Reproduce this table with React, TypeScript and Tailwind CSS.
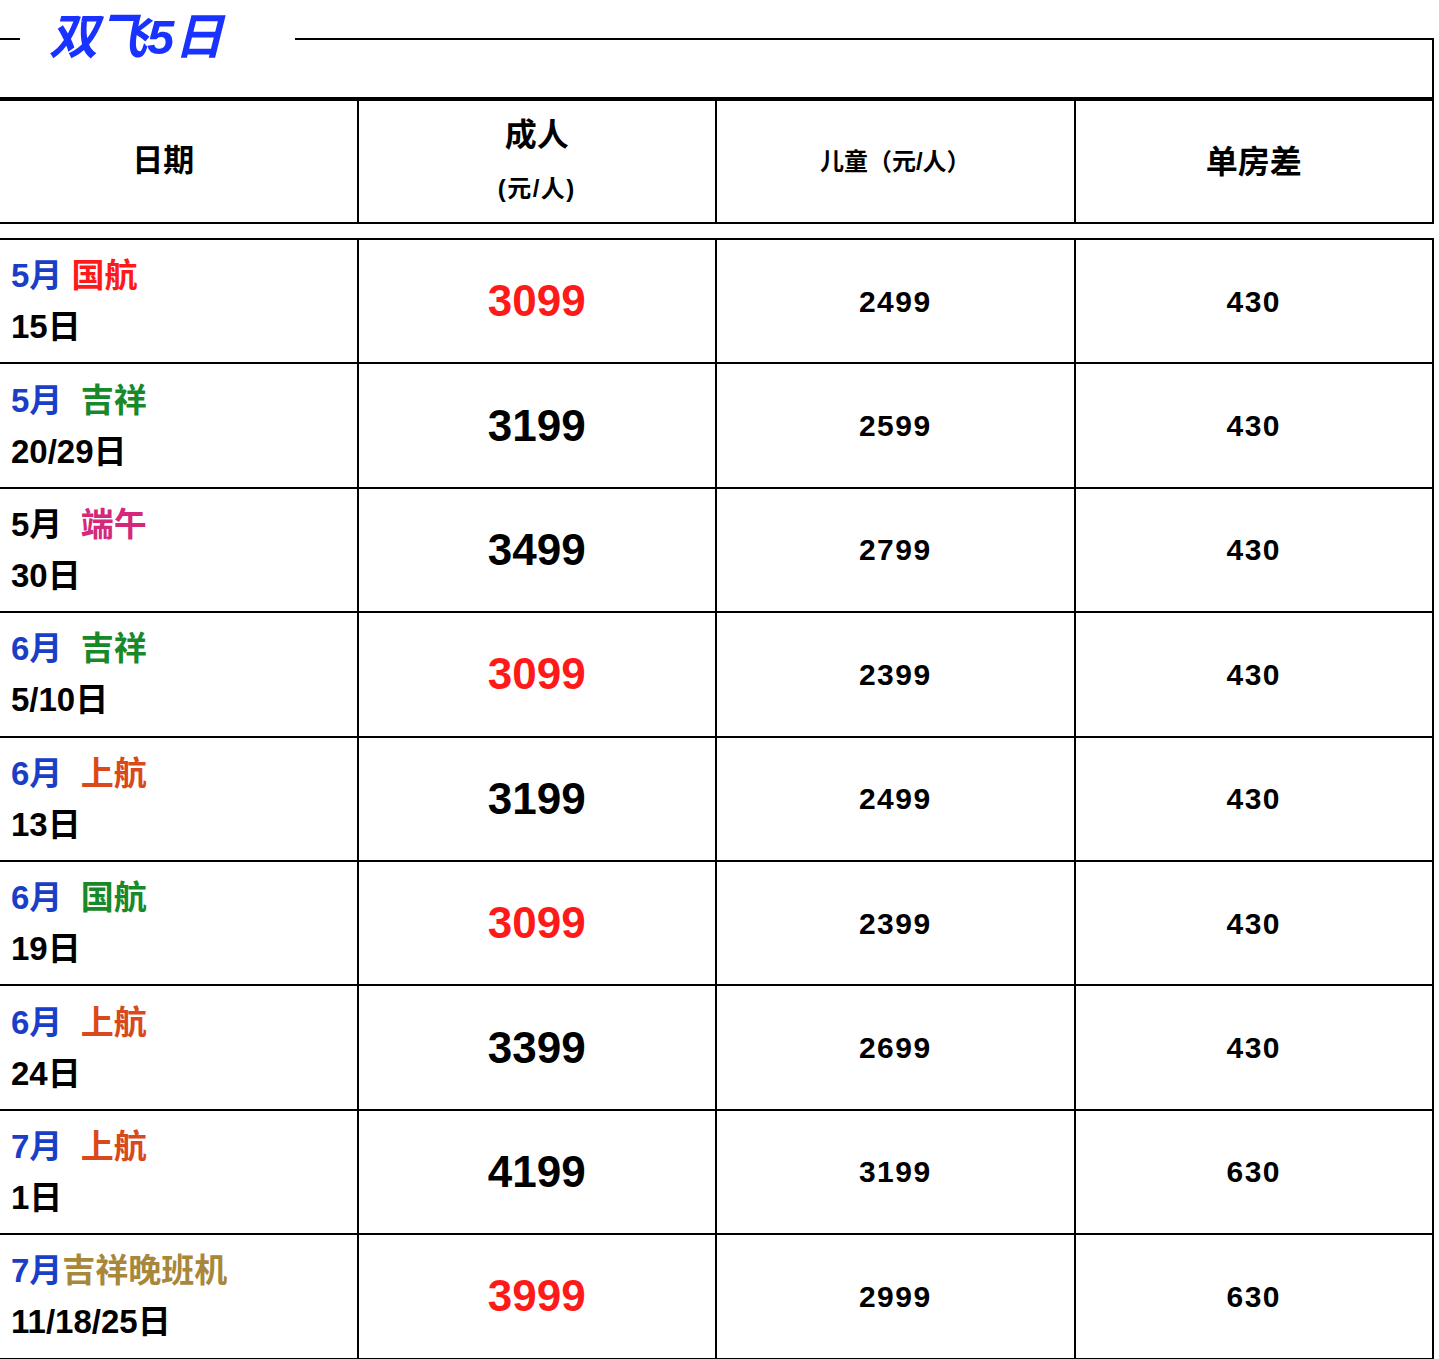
const FONT = "font-['Liberation_Sans','Noto_Sans_CJK_SC',sans-serif]";

type Row = {
  month: string;
  monthColor: string;
  gap: string;
  airline: string;
  airlineColor: string;
  days: string;
  adult: string;
  adultRed: boolean;
  child: string;
  single: string;
};

const rows: Row[] = [
  { month: '5月', monthColor: 'text-[#1b3ec6]', gap: ' ', airline: '国航', airlineColor: 'text-[#ff1a1a]', days: '15日', adult: '3099', adultRed: true, child: '2499', single: '430' },
  { month: '5月', monthColor: 'text-[#1b3ec6]', gap: '  ', airline: '吉祥', airlineColor: 'text-[#17892b]', days: '20/29日', adult: '3199', adultRed: false, child: '2599', single: '430' },
  { month: '5月', monthColor: 'text-black', gap: '  ', airline: '端午', airlineColor: 'text-[#d4297a]', days: '30日', adult: '3499', adultRed: false, child: '2799', single: '430' },
  { month: '6月', monthColor: 'text-[#1b3ec6]', gap: '  ', airline: '吉祥', airlineColor: 'text-[#17892b]', days: '5/10日', adult: '3099', adultRed: true, child: '2399', single: '430' },
  { month: '6月', monthColor: 'text-[#1b3ec6]', gap: '  ', airline: '上航', airlineColor: 'text-[#d8491c]', days: '13日', adult: '3199', adultRed: false, child: '2499', single: '430' },
  { month: '6月', monthColor: 'text-[#1b3ec6]', gap: '  ', airline: '国航', airlineColor: 'text-[#17892b]', days: '19日', adult: '3099', adultRed: true, child: '2399', single: '430' },
  { month: '6月', monthColor: 'text-[#1b3ec6]', gap: '  ', airline: '上航', airlineColor: 'text-[#d8491c]', days: '24日', adult: '3399', adultRed: false, child: '2699', single: '430' },
  { month: '7月', monthColor: 'text-[#1b3ec6]', gap: '  ', airline: '上航', airlineColor: 'text-[#d8491c]', days: '1日', adult: '4199', adultRed: false, child: '3199', single: '630' },
  { month: '7月', monthColor: 'text-[#1b3ec6]', gap: '', airline: '吉祥晚班机', airlineColor: 'text-[#a8873a]', days: '11/18/25日', adult: '3999', adultRed: true, child: '2999', single: '630' },
];

function PriceRow({ row }: { row: Row }) {
  return (
    <div className="grid h-[124.4px] grid-cols-4 border-b-2 border-black">
      <div className="flex flex-col justify-center border-r-2 border-black pl-[11px] text-[33px] font-bold leading-[51px]">
        <div className="whitespace-pre">
          <span className={row.monthColor}>{row.month}</span>
          {row.gap}
          <span className={row.airlineColor}>{row.airline}</span>
        </div>
        <div className="text-black">{row.days}</div>
      </div>
      <div
        className={`flex items-center justify-center border-r-2 border-black text-[44px] font-bold ${
          row.adultRed ? 'text-[#ff1a1a]' : 'text-black'
        }`}
      >
        {row.adult}
      </div>
      <div className="flex items-center justify-center border-r-2 border-black text-[30px] font-bold tracking-[1.5px] text-black">
        {row.child}
      </div>
      <div className="flex items-center justify-center border-r-2 border-black text-[30px] font-bold tracking-[1.5px] text-black">
        {row.single}
      </div>
    </div>
  );
}

export default function App() {
  return (
    <div className={`w-[1434px] bg-white ${FONT}`}>
      {/* title strip */}
      <div className="flex h-[97px]">
        <div className="mt-[38px] w-[20px] border-t-2 border-black" />
        <div className="flex h-[76px] w-[275px] items-center pl-[29px] text-[49px] font-bold italic text-[#1a32ff]">
          双飞5日
        </div>
        <div className="mt-[38px] flex-1 border-r-2 border-t-2 border-black" />
      </div>

      {/* header */}
      <div className="grid h-[127px] grid-cols-4 border-b-2 border-t-4 border-black text-black">
        <div className="flex items-center justify-center border-r-2 border-black pr-[30px] text-[31px] font-bold">日期</div>
        <div className="flex flex-col items-center justify-center border-r-2 border-black font-bold">
          <div className="text-[32px] leading-[54px]">成人</div>
          <div className="text-[24px] leading-[54px] tracking-[1.5px]">(元/人)</div>
        </div>
        <div className="flex items-center justify-center border-r-2 border-black text-[24px] font-bold">儿童（元/人）</div>
        <div className="flex items-center justify-center border-r-2 border-black text-[32px] font-bold">单房差</div>
      </div>

      <div className="h-[14px]" />

      <div className="border-t-2 border-black">
        {rows.map((r, i) => (
          <PriceRow key={i} row={r} />
        ))}
      </div>
    </div>
  );
}
